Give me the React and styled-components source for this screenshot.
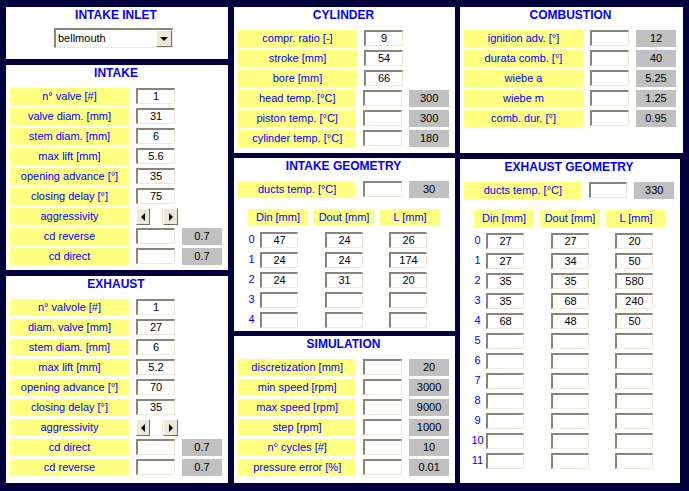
import styled, { createGlobalStyle } from "styled-components";

const GlobalStyle = createGlobalStyle`
  html, body {
    margin: 0;
    padding: 0;
    background: #00003c;
  }
  * { box-sizing: border-box; }
`;

const Screen = styled.div`
  display: flex;
  gap: ${({ gap }) => gap || 6}px;
  width: 689px;
  height: 491px;
  padding: 7px 6px 8px 6px;
  background: #00003c;
  font-family: "Liberation Sans", Arial, sans-serif;
`;

const Column = styled.div`
  display: flex;
  flex-direction: column;
  gap: ${({ gap }) => gap || 6}px;
  width: ${({ width }) => width}px;
  flex-shrink: 0;
  ${({ trail }) => trail && `margin-left: -1px;`}
`;

const Panel = styled.div`
  background: #ffffff;
  padding: 0 6px 0 4px;
  width: ${({ width }) => (width ? `${width}px` : "auto")};
  height: ${({ height }) => (height ? `${height}px` : "auto")};
  flex: ${({ height }) => (height ? "0 0 auto" : "1 1 auto")};
`;

const Title = styled.div`
  height: 16px;
  line-height: 16px;
  margin-bottom: 7px;
  text-align: center;
  font-size: 12px;
  font-weight: bold;
  color: #0000ff;
`;

const Rows = styled.div`
  display: flex;
  flex-direction: column;
  gap: 3px;
`;

const Row = styled.div`
  display: flex;
  align-items: flex-start;
  height: 17px;
`;

const Label = styled.div`
  width: ${({ width }) => width || 119}px;
  height: 17px;
  line-height: 17px;
  background: #ffff80;
  color: #0000ff;
  font-size: 11px;
  text-align: center;
  white-space: nowrap;
`;

const Field = styled.div`
  width: ${({ width }) => width || 39}px;
  height: 16px;
  margin-left: ${({ offset }) => (offset === undefined ? 7 : offset)}px;
  background: #ffffff;
  border-top: 2px solid #86867a;
  border-left: 2px solid #86867a;
  border-bottom: 1px solid #ece9d8;
  border-right: 1px solid #ece9d8;
  color: #000000;
  font-size: 11px;
  line-height: 13px;
  text-align: center;
`;

const Readout = styled.div`
  width: 40px;
  height: 17px;
  margin-left: 7px;
  background: #c0c0c0;
  color: #000000;
  font-size: 11px;
  line-height: 17px;
  text-align: center;
`;

const Select = styled.div`
  display: flex;
  width: 119px;
  height: 20px;
  margin-left: 44px;
  margin-top: -2px;
  background: #ffffff;
  border-top: 2px solid #86867a;
  border-left: 2px solid #86867a;
  border-bottom: 1px solid #ece9d8;
  border-right: 1px solid #ece9d8;
`;

const SelectText = styled.div`
  flex: 1;
  padding-left: 2px;
  font-size: 11px;
  line-height: 17px;
  color: #000000;
`;

const Bevel = styled.div`
  display: flex;
  align-items: center;
  justify-content: center;
  width: ${({ width }) => width}px;
  height: 100%;
  background: #ece9d8;
  border-top: 1px solid #ffffff;
  border-left: 1px solid #ffffff;
  border-bottom: 1px solid #716f64;
  border-right: 1px solid #716f64;
`;

const ScrollBar = styled.div`
  display: flex;
  width: 42px;
  height: 17px;
  margin-left: 7px;
  background: #f4f3ee;
`;

const Thumb = styled.div`
  width: 13px;
  height: 100%;
  background: #ffffff;
  border-right: 1px solid #ece9d8;
`;

const HeaderCells = styled.div`
  display: flex;
  gap: 6px;
  margin: 11px 0 6px 10px;
`;

const GeoGrid = styled.div`
  display: grid;
  grid-template-columns: 17px 65px 64px 38px;
  grid-auto-rows: 16px;
  row-gap: 4px;
  margin-left: 5px;
`;

const Index = styled.div`
  color: #0000ff;
  font-size: 11px;
  line-height: 14px;
  text-align: center;
`;

const Arrow = ({ dir }) => {
  const pts = {
    left: "5,1 5,9 1,5",
    right: "1,1 1,9 5,5",
    down: "0,1 8,1 4,5",
  }[dir];
  const w = dir === "down" ? 8 : 6;
  const h = dir === "down" ? 6 : 10;
  return (
    <svg width={w} height={h} viewBox={`0 0 ${w} ${h}`}>
      <polygon points={pts} fill="#000000" />
    </svg>
  );
};

const Scroller = () => (
  <ScrollBar>
    <Bevel width={14}>
      <Arrow dir="left" />
    </Bevel>
    <Thumb />
    <Bevel width={15}>
      <Arrow dir="right" />
    </Bevel>
  </ScrollBar>
);

const ParamRows = ({ items }) => (
  <Rows>
    {items.map(([label, value, readout], i) => (
      <Row key={i}>
        <Label>{label}</Label>
        {value === "scroll" ? <Scroller /> : <Field>{value}</Field>}
        {readout !== undefined && <Readout>{readout}</Readout>}
      </Row>
    ))}
  </Rows>
);

const Geometry = ({ temp, rows }) => (
  <>
    <Rows>
      <Row>
        <Label>ducts temp. [°C]</Label>
        <Field />
        <Readout>{temp}</Readout>
      </Row>
    </Rows>
    <HeaderCells>
      <Label width={60}>Din [mm]</Label>
      <Label width={60}>Dout [mm]</Label>
      <Label width={60}>L [mm]</Label>
    </HeaderCells>
    <GeoGrid>
      {rows.map((r, i) => [
        <Index key={`i${i}`}>{i}</Index>,
        <Field key={`a${i}`} width={38} offset={0}>{r[0]}</Field>,
        <Field key={`b${i}`} width={38} offset={0}>{r[1]}</Field>,
        <Field key={`c${i}`} width={38} offset={0}>{r[2]}</Field>,
      ])}
    </GeoGrid>
  </>
);

const intake = [
  ["n° valve [#]", "1"],
  ["valve diam. [mm]", "31"],
  ["stem diam. [mm]", "6"],
  ["max lift [mm]", "5.6"],
  ["opening advance [°]", "35"],
  ["closing delay [°]", "75"],
  ["aggressivity", "scroll"],
  ["cd reverse", "", "0.7"],
  ["cd direct", "", "0.7"],
];

const exhaust = [
  ["n° valvole [#]", "1"],
  ["diam. valve [mm]", "27"],
  ["stem diam. [mm]", "6"],
  ["max lift [mm]", "5.2"],
  ["opening advance [°]", "70"],
  ["closing delay [°]", "35"],
  ["aggressivity", "scroll"],
  ["cd direct", "", "0.7"],
  ["cd reverse", "", "0.7"],
];

const cylinder = [
  ["compr. ratio [-]", "9"],
  ["stroke [mm]", "54"],
  ["bore [mm]", "66"],
  ["head temp. [°C]", "", "300"],
  ["piston temp. [°C]", "", "300"],
  ["cylinder temp. [°C]", "", "180"],
];

const combustion = [
  ["ignition adv. [°]", "", "12"],
  ["durata comb. [°]", "", "40"],
  ["wiebe a", "", "5.25"],
  ["wiebe m", "", "1.25"],
  ["comb. dur. [°]", "", "0.95"],
];

const simulation = [
  ["discretization [mm]", "", "20"],
  ["min speed [rpm]", "", "3000"],
  ["max speed [rpm]", "", "9000"],
  ["step [rpm]", "", "1000"],
  ["n° cycles [#]", "", "10"],
  ["pressure error [%]", "", "0.01"],
];

const intakeGeo = [
  ["47", "24", "26"],
  ["24", "24", "174"],
  ["24", "31", "20"],
  [],
  [],
];

const exhaustGeo = [
  ["27", "27", "20"],
  ["27", "34", "50"],
  ["35", "35", "580"],
  ["35", "68", "240"],
  ["68", "48", "50"],
  [], [], [], [], [], [], [],
];

const App = () => {
  return (
    <>
      <GlobalStyle />
      <Screen>
        <Column width={222}>
          <Panel height={52}>
            <Title>INTAKE INLET</Title>
            <Select>
              <SelectText>bellmouth</SelectText>
              <Bevel width={16}>
                <Arrow dir="down" />
              </Bevel>
            </Select>
          </Panel>
          <Panel height={205}>
            <Title>INTAKE</Title>
            <ParamRows items={intake} />
          </Panel>
          <Panel>
            <Title>EXHAUST</Title>
            <ParamRows items={exhaust} />
          </Panel>
        </Column>
        <Column width={221} gap={5}>
          <Panel height={146}>
            <Title>CYLINDER</Title>
            <ParamRows items={cylinder} />
          </Panel>
          <Panel height={173}>
            <Title>INTAKE GEOMETRY</Title>
            <Geometry temp="30" rows={intakeGeo} />
          </Panel>
          <Panel>
            <Title>SIMULATION</Title>
            <ParamRows items={simulation} />
          </Panel>
        </Column>
        <Column width={223} trail>
          <Panel height={146}>
            <Title>COMBUSTION</Title>
            <ParamRows items={combustion} />
          </Panel>
          <Panel width={220}>
            <Title>EXHAUST GEOMETRY</Title>
            <Geometry temp="330" rows={exhaustGeo} />
          </Panel>
        </Column>
      </Screen>
    </>
  );
};

export default App;
